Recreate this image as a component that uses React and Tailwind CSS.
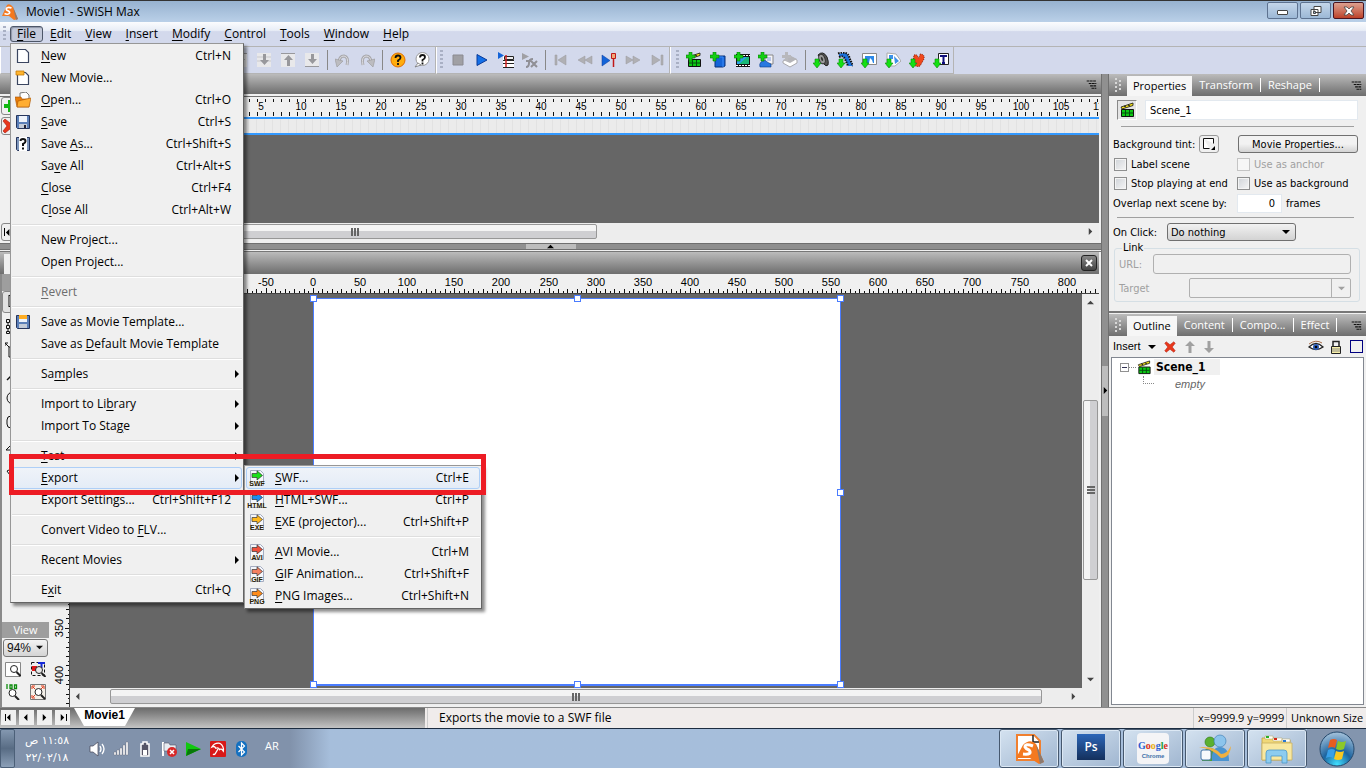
import React, { useState } from 'react';

const fileMenu = [
  { label: '&New', keys: 'Ctrl+N', icon: 'page' },
  { label: 'New Movie...', icon: 'movie' },
  { label: '&Open...', keys: 'Ctrl+O', icon: 'open' },
  { label: '&Save', keys: 'Ctrl+S', icon: 'save' },
  { label: 'Save &As...', keys: 'Ctrl+Shift+S', icon: 'saveAs' },
  { label: 'Sa&ve All', keys: 'Ctrl+Alt+S' },
  { label: '&Close', keys: 'Ctrl+F4' },
  { label: 'C&lose All', keys: 'Ctrl+Alt+W' },
  null,
  { label: 'New Project...' },
  { label: 'Open Project...' },
  null,
  { label: '&Revert', disabled: true },
  null,
  { label: 'Save as Movie Template...', icon: 'template' },
  { label: 'Save as &Default Movie Template' },
  null,
  { label: 'Sa&mples', sub: true },
  null,
  { label: 'Import to Li&brary', sub: true },
  { label: 'Import To Sta&ge', sub: true },
  null,
  { label: '&Test', sub: true },
  { label: '&Export', sub: true, open: true },
  { label: 'Export Settings...', keys: 'Ctrl+Shift+F12' },
  null,
  { label: 'Convert Video to &FLV...' },
  null,
  { label: 'Recent Movies', sub: true },
  null,
  { label: 'E&xit', keys: 'Ctrl+Q' },
];

const exportMenu = [
  { label: '&SWF...', keys: 'Ctrl+E', type: 'SWF', color: '#1be01b', open: true },
  { label: '&HTML+SWF...', keys: 'Ctrl+P', type: 'HTML', color: '#1b8cf0' },
  { label: '&EXE (projector)...', keys: 'Ctrl+Shift+P', type: 'EXE', color: '#ffb81c' },
  null,
  { label: '&AVI Movie...', keys: 'Ctrl+M', type: 'AVI', color: '#f0503c' },
  { label: '&GIF Animation...', keys: 'Ctrl+Shift+F', type: 'GIF', color: '#f58060' },
  { label: '&PNG Images...', keys: 'Ctrl+Shift+N', type: 'PNG', color: '#ff8c1a' },
];

const Plus = () => <path d="M3 0h3v3h3v3H6v3H3V6H0V3h3z" fill="#12d012" stroke="#0a7a0a" strokeWidth=".6" />;
const Down = () => <path d="M2 7h4v4h2l-4 5-4-5h2z" fill="#14e014" stroke="#0a8a0a" strokeWidth=".6" />;

const Clapper = () => (
  <>
    <path d="M2.500 7.500h12v7h-12z" fill="#0cc814" stroke="#111" />
    <path d="M3 11h11M6.500 8v6M10.500 8v6" stroke="#064a10" />
    <path d="M2 5l12-4v2.500L3 7z" fill="#f5e21a" stroke="#111" strokeWidth=".8" />
    <path d="M5 4l2 1M9 3l2 1" stroke="#111" />
  </>
);

const icons = {
  logo: (
    <>
      <path d="M0 12L5 1q3-2 6 2l5 12-4 1-5-4z" fill="#f4791f" />
      <path d="M11 3l5 12-2 1z" fill="#8c7a70" />
      <path d="M9.500 4C6 2.500 3.500 4 4.500 5.800 5.200 7 8.500 7 7.500 9.200 6.800 10.500 4 10.200 2.500 9.500" fill="none" stroke="#fff" strokeWidth="1.700" />
    </>
  ),
  page: <path d="M2.500 1.500h8l3 3v10h-11z" fill="#fff" stroke="#3b4660" strokeWidth="1.200" />,
  movie: (
    <>
      <path d="M2.500 2.500h8l3 3v9h-11z" fill="#fff" stroke="#3b4660" strokeWidth="1.200" />
      <path d="M1 1h8v4H1z" fill="#ffb52e" stroke="#c67c08" strokeWidth=".8" />
    </>
  ),
  open: (
    <>
      <path d="M5 1l6-1 3 3v6H5z" fill="#fff" stroke="#777" />
      <path d="M0 5h6l1 2h7v8H2z" fill="#e87c08" stroke="#a85200" strokeWidth=".6" />
      <path d="M3 9l13-3-2 9H2z" fill="#ffad32" stroke="#a85200" strokeWidth=".6" />
    </>
  ),
  save: (
    <>
      <path d="M1.500 1.500h13v13h-12l-1-1z" fill="#5b7fb8" stroke="#26355c" />
      <path d="M4 2h8v6H4z" fill="#eef3fb" />
      <path d="M4 10h8v4H4z" fill="#c3cbd8" />
      <path d="M9 11h2v3H9z" fill="#223" />
    </>
  ),
  saveAs: (
    <>
      <path d="M1.500 1.500h13v13h-12l-1-1z" fill="#7d96bc" stroke="#26355c" />
      <path d="M4 1h8v14H4z" fill="#fff" />
      <path d="M5.500 5q0-2 2.500-2t2.500 2.200Q10.500 7 8 8v2M8 11.500v2" fill="none" stroke="#111" strokeWidth="2" />
    </>
  ),
  template: (
    <>
      <path d="M1.500 1.500h13v13h-12l-1-1z" fill="#5b7fb8" stroke="#26355c" />
      <path d="M4 1h8v4H4z" fill="#ffad22" />
      <path d="M4 5h8v3H4z" fill="#eef3fb" />
      <path d="M4 10h8v4H4z" fill="#c3cbd8" />
    </>
  ),
  arrowDown: (
    <>
      <path d="M1 1h14v14H1z" fill="#e8e8ea" />
      <path d="M1 5h14M1 9h14" stroke="#c8c8cc" />
      <path d="M7 2h3v6h3l-4.500 5L4 8h3z" fill="#98989c" />
    </>
  ),
  arrowUp: (
    <>
      <path d="M1 1h14v14H1z" fill="#e8e8ea" />
      <path d="M1 1.500h14" stroke="#98989c" />
      <path d="M7 14h3V8h3L8.500 3 4 8h3z" fill="#98989c" />
    </>
  ),
  arrowBottom: (
    <>
      <path d="M1 1h14v14H1z" fill="#e8e8ea" />
      <path d="M1 14.500h14" stroke="#98989c" />
      <path d="M7 2h3v5h3l-4.500 5L4 7h3z" fill="#98989c" />
    </>
  ),
  undo: (
    <>
      <path d="M4 11Q4 4 9 4q5 1 3 9" fill="none" stroke="#a8a8ac" strokeWidth="3" />
      <path d="M4 11Q4 4 9 4q5 1 3 9" fill="none" stroke="#dcdce0" />
      <path d="M0 7l8 2-6 6z" fill="#bcbcc0" stroke="#989898" strokeWidth=".6" />
    </>
  ),
  redo: (
    <>
      <path d="M12 11Q12 4 7 4 2 5 4 13" fill="none" stroke="#a8a8ac" strokeWidth="3" />
      <path d="M12 11Q12 4 7 4 2 5 4 13" fill="none" stroke="#dcdce0" />
      <path d="M16 7l-8 2 6 6z" fill="#bcbcc0" stroke="#989898" strokeWidth=".6" />
    </>
  ),
  help: (
    <>
      <circle cx="8" cy="8" r="7" fill="#ffac0c" stroke="#e06c00" />
      <path d="M5.500 6q0-2.500 2.500-2.500t2.500 2.200Q10.500 7 8 8.500V10M8 11v2" fill="none" stroke="#111" strokeWidth="1.800" />
    </>
  ),
  context: (
    <>
      <circle cx="8.500" cy="7" r="6.500" fill="#fff" stroke="#999" />
      <path d="M4 11l-3 4 6-2z" fill="#fff" stroke="#777" strokeWidth=".8" />
      <path d="M6 5.500Q6 3 8.500 3T11 5.200Q11 6.500 8.500 8v1.500M8.500 10.500v2" fill="none" stroke="#111" strokeWidth="1.800" />
    </>
  ),
  stop: <path d="M3 3h10v10H3z" fill="#a0a0a4" stroke="#8a8a90" />,
  play: <path d="M3 2.500v11L13 8z" fill="#1470e8" stroke="#0a3a98" />,
  playMovie: (
    <>
      <path d="M5 4h11v12H5z" fill="#fff" />
      <path d="M5 8.500h11M5 11.500h11M5 15.500h11" stroke="#222" />
      <path d="M6.500 4.500h9v3h-9z" fill="#eee" stroke="#222" />
      <path d="M8 3v12" stroke="#d02020" strokeWidth="1.500" />
      <path d="M0 0v7l6-3.500z" fill="#1464d8" />
    </>
  ),
  playFx: (
    <>
      <path d="M0 1v7l7-3.500z" fill="#a0a0a4" />
      <path d="M4 15q3 0 3-4t4-4M4 9h5M9 9l6 6M15 9l-6 6" fill="none" stroke="#909096" strokeWidth="2" />
    </>
  ),
  first: <path d="M2 3h2v10H2zM13 3v10L5 8z" fill="#b0b0b4" stroke="#98989c" strokeWidth=".5" />,
  back: <path d="M8 4v8L1 8zM15 4v8L8 8z" fill="#b0b0b4" stroke="#98989c" strokeWidth=".5" />,
  step: (
    <>
      <path d="M1 3v11l8-5.500z" fill="#1464d8" stroke="#0a3a98" strokeWidth=".5" />
      <path d="M10.500 1.500h4v5h-4z" fill="#f0a878" stroke="#c01818" />
      <path d="M12.500 7v8" stroke="#c01818" strokeWidth="1.500" />
    </>
  ),
  forward: <path d="M1 4v8l7-4zM8 4v8l7-4z" fill="#b0b0b4" stroke="#98989c" strokeWidth=".5" />,
  last: <path d="M3 3v10l8-5zM12 3h2v10h-2z" fill="#b0b0b4" stroke="#98989c" strokeWidth=".5" />,
  addScene: (
    <>
      <Clapper />
      <Plus />
    </>
  ),
  addShape: (
    <>
      <path d="M5 5l2-1h8v10l-2 1H5z" fill="#1464d8" stroke="#083078" />
      <path d="M5 5h8v10" fill="none" stroke="#3c8cf8" />
      <Plus />
    </>
  ),
  addFilm: (
    <>
      <path d="M2 2h14v13H2z" fill="#111" />
      <path d="M3 5h12v7H3z" fill="#28a0e8" />
      <path d="M5 12l8-7h2v7z" fill="#18b878" />
      <path d="M3 3.500h13M2 13.500h14" stroke="#fff" strokeDasharray="2 1" />
      <Plus />
    </>
  ),
  addButton: (
    <>
      <path d="M7 3h8v9H7z" fill="#f4f4f8" stroke="#888" />
      <path d="M9 5h4v4H9z" fill="#b8c4e8" />
      <path d="M3 10q5-3 6 0l4 2v3H2q-1-3 1-5z" fill="#2878e0" stroke="#0a3a88" strokeWidth=".6" />
      <Plus />
    </>
  ),
  addLayer: (
    <>
      <path d="M1 9l8-4 6 3v3l-7 4-7-4z" fill="#fff" stroke="#a8a8ac" />
      <path d="M1 8l8-4 6 3-7 4z" fill="#b4b4b8" />
      <path d="M3 0h3v3h3v3H6v3H3V6H0V3h3z" fill="#b8b8bc" />
    </>
  ),
  importSound: (
    <>
      <path d="M5 3q5-5 9 2 2 5 1 8-2 2-4-1z" fill="#555" stroke="#222" />
      <ellipse cx="9" cy="7" rx="3" ry="5" fill="#999" stroke="#333" transform="rotate(-20 9 7)" />
      <ellipse cx="9" cy="7" rx="1" ry="2" fill="#333" transform="rotate(-20 9 7)" />
      <Down />
    </>
  ),
  importVideo: (
    <>
      <path d="M2 2q9-3 10 4l4 8h-5L8 7Q6 3 2 5z" fill="#1c74e0" />
      <path d="M1 1.500q10-3 11.500 4.500l3.500 8M2 5q4-2 6 2l3 7" fill="none" stroke="#111" strokeWidth="2" strokeDasharray="1.500 1" />
      <Down />
    </>
  ),
  importImage: (
    <>
      <path d="M1.500 1.500h14v11h-14z" fill="#fff" stroke="#888" />
      <path d="M4 4h9v7H4z" fill="#2c88e8" />
      <path d="M8 11l1-5 2 2 1 3z" fill="#fff" />
      <Down />
    </>
  ),
  importVector: (
    <>
      <path d="M2 1l9 1 5 7-6 5H2z" fill="#fff" stroke="#aaa" />
      <path d="M4 3h4v4H4zM9 4l5 5-4 3z" fill="#3c90e8" />
      <Down />
    </>
  ),
  importFlash: (
    <>
      <path d="M5 3q4-1 4 3 2-1 2-4 5 0 4 5l-4 7q-5 2-7-4z" fill="#f0481c" stroke="#8a1c08" strokeDasharray="1 1" />
      <Down />
    </>
  ),
  importText: (
    <>
      <path d="M5.500 1.500h10v11h-10z" fill="#fff" stroke="#222" />
      <path d="M7 4h7M10.500 4v7M9 11h3" stroke="#10107c" strokeWidth="2" />
      <Down />
    </>
  ),
  clapper: <Clapper />,
  add: <path d="M6 2h4v4h4v4h-4v4H6v-4H2V6h4z" fill="#12b812" />,
  remove: <path d="M3 1l5 4 5-4 2 2-4 5 4 5-2 2-5-4-5 4-2-2 4-5-4-5z" fill="#e8381c" stroke="#a81408" strokeWidth=".6" />,
  moveUp: <path d="M8 2l5 5h-3.500v7h-3V7H3z" fill="#a0a0a0" />,
  moveDown: <path d="M8 14l5-5h-3.500V2h-3v7H3z" fill="#a0a0a0" />,
  eye: (
    <>
      <path d="M1 8q7-7 14 0-7 5-14 0z" fill="#fff" stroke="#222" strokeWidth="1.300" />
      <circle cx="8" cy="8" r="3" fill="#2c5cb8" />
      <circle cx="8" cy="8" r="1.300" fill="#000" />
      <path d="M1 5q7-5 13-1" fill="none" stroke="#a86c48" />
    </>
  ),
  lock: (
    <>
      <path d="M5 8V2.500h6V8" fill="none" stroke="#222" strokeWidth="1.500" />
      <path d="M3.500 7.500h9v7h-9z" fill="#f8f0a8" stroke="#222" />
      <path d="M4 10h8M4 12h8" stroke="#888" />
    </>
  ),
  zoomPage: (
    <>
      <path d="M.5 1.500h15v14H.5z" fill="#fff" stroke="#888" />
      <circle cx="9" cy="8" r="3.500" fill="none" stroke="#222" />
      <path d="M11.500 11l4 4" stroke="#222" strokeWidth="2" />
    </>
  ),
  zoomSelection: (
    <>
      <path d="M1.500 1.500h13v13h-13z" fill="none" stroke="#111" strokeDasharray="3 2" />
      <path d="M2 5h5v5H2z" fill="#e01818" />
      <path d="M8 2h7M11.500 2v5" stroke="#1428d8" strokeWidth="2" />
      <circle cx="9" cy="9" r="3.500" fill="#e8e8e8" stroke="#222" />
      <path d="M11.500 12l4 4" stroke="#222" strokeWidth="2" />
    </>
  ),
  zoomFull: (
    <>
      <path d="M2 0v5M5 1h2v3.500H5zM9.500 1h2v3.500h-2z" fill="none" stroke="#0c8c0c" strokeWidth="1.300" />
      <circle cx="7.500" cy="9" r="3.500" fill="#fff" stroke="#222" />
      <path d="M10 12l4 4" stroke="#222" strokeWidth="2" />
    </>
  ),
  zoomFit: (
    <>
      <path d="M.5.5h15v15H.5z" fill="#f4f0e8" stroke="#777" />
      <path d="M2 5V2h3M11 2h3v3M2 11v3h3M3 3l2 2M13 3l-2 2M3 13l2-2" fill="none" stroke="#e03818" />
      <circle cx="8.500" cy="8" r="3.500" fill="#fff" stroke="#222" />
      <path d="M11 11l4 4" stroke="#222" strokeWidth="2" />
    </>
  ),
  list: <path d="M1 3h14M4 6.500h11M6 10h9M8 13.500h7" stroke="#111" strokeWidth="1.600" strokeDasharray="4 .7" />,
  pointer: <path d="M4 1v12l3-3 2 5 2-1-2-5h4z" fill="#fff" stroke="#111" />,
  nodes: <path d="M1.500 1.500h3v3h-3zM1.500 7.500h3v3h-3zM1.500 13.500h3v2h-3zM3 4v3M3 10v3M5 3h8" fill="none" stroke="#111" />,
  transform: <path d="M0 1l4 4M0 4V1h3M4 5h10v10H4z" fill="none" stroke="#111" />,
  line: <path d="M2 14L14 2" stroke="#111" strokeWidth="1.500" />,
  oval: <ellipse cx="8" cy="8" rx="6" ry="6" fill="none" stroke="#111" />,
  round: <rect x="2" y="2" width="12" height="12" rx="4" fill="none" stroke="#111" />,
  shape: <path d="M1 12L12 1v11z" fill="none" stroke="#111" />,
  hand: <path d="M2 9l2-1 2 2V2h2v5h5v6l-3 3H7z" fill="#fff" stroke="#111" />,
};

const Icon = ({ name, className = 'w-4 h-4' }) => (
  <svg viewBox="0 0 16 16" className={`shrink-0 ${className}`} aria-hidden="true">
    {icons[name]}
  </svg>
);

const ExportIcon = ({ type, color }) => (
  <svg viewBox="0 0 16 16" className="w-4 h-4 shrink-0 overflow-visible" aria-hidden="true">
    <path d="M1.500.5h10l3 3v12h-13z" fill="#f4f6fb" stroke="#a4acc0" />
    <path d="M3 3.500h5V.8L13.500 5.500 8 10V7.500H3z" fill={color} stroke="#333" strokeWidth=".7" />
    <text x="8" y="16" textAnchor="middle" className="fill-[#2c1c00] font-['Liberation_Sans'] text-[7px] font-bold">
      {type}
    </text>
  </svg>
);

// "&" marks the letter that is underlined
const Mnemonic = ({ text }) => {
  const at = text.indexOf('&');
  if (at < 0) return <span>{text}</span>;
  return (
    <span>
      {text.slice(0, at)}
      <span className="underline underline-offset-2">{text[at + 1]}</span>
      {text.slice(at + 2)}
    </span>
  );
};

const MenuItem = ({ item, children }) => {
  if (!item) return <div className="h-2 pt-[3px]"><div className="h-[2px] border-t border-[#dedede] bg-white" /></div>;

  return (
    <div className="relative">
      <button
        disabled={item.disabled}
        className={`flex w-full h-[22px] items-center rounded-[3px] border pl-[2px] text-left whitespace-nowrap ${
          item.sub ? 'pr-[2px]' : 'pr-[10px]'
        } ${item.open ? 'border-[#aecff7] bg-linear-to-b from-[#eff3f9] to-[#e4ecf7]' : 'border-transparent'} ${
          item.disabled ? 'text-[#6d6d6d]' : 'text-black'
        }`}
      >
        <span className="w-[26px] shrink-0">
          {item.icon && <Icon name={item.icon} />}
          {item.type && <ExportIcon type={item.type} color={item.color} />}
        </span>
        <span className="flex-1"><Mnemonic text={item.label} /></span>
        {item.keys && <span>{item.keys}</span>}
        {item.sub && (
          <svg viewBox="0 0 4 8" className="w-1 h-2" aria-hidden="true"><path d="M0 0v8l4-4z" /></svg>
        )}
      </button>
      {children}
    </div>
  );
};

const menuBox = 'absolute border border-[#979797] border-r-[#646464] border-b-[#646464] bg-[#f0f0f0] p-px shadow-[3px_3px_3px_rgba(0,0,0,0.45)]';

const MenuBar = () => {
  const [open, setOpen] = useState(true);
  const names = ['&Edit', '&View', '&Insert', '&Modify', '&Control', '&Tools', '&Window', '&Help'];

  return (
    <nav className="flex h-6 shrink-0 items-center bg-linear-to-b from-[#fbfcfe] from-0% via-[#e8edf6] via-35% to-[#d3d9ec] to-40% pl-[3px]">
      <Grip />
      <div className="relative z-20 ml-1">
        <button
          onClick={() => setOpen(!open)}
          className="block h-4 w-[33px] rounded-[3px] border border-[#4d5668] bg-[#c3c9da] leading-none shadow-[inset_1px_1px_1px_#8d94a6]"
        >
          <Mnemonic text="&File" />
        </button>
        {open && (
          <div className={`${menuBox} top-[17px] left-0 w-[234px]`}>
            {fileMenu.map((item, i) => (
              <MenuItem key={i} item={item}>
                {item?.open && (
                  <div className={`${menuBox} -top-[2px] left-[232px] w-[238px]`}>
                    {exportMenu.map((sub, j) => <MenuItem key={j} item={sub} />)}
                  </div>
                )}
              </MenuItem>
            ))}
          </div>
        )}
      </div>
      <div className="flex">
        {names.map(name => (
          <button key={name} className="px-[7px]"><Mnemonic text={name} /></button>
        ))}
      </div>
    </nav>
  );
};

const Grip = ({ className = 'h-4' }) => (
  <span className={`w-[3px] shrink-0 bg-[repeating-linear-gradient(#a9b0c4_0_2px,transparent_2px_4px)] ${className}`} />
);

const ToolGroup = ({ items, className = '' }) => (
  <div className={`flex h-full items-center border-r border-b border-[#b4b4b4] border-l border-l-white ${className}`}>
    <Grip className="mx-[3px] h-5" />
    {items.map((name, i) =>
      name ? (
        <button key={i} aria-label={name} className="flex w-6 justify-center"><Icon name={name} /></button>
      ) : (
        <span key={i} className="mx-[3px] h-5 w-px bg-[#888]" />
      )
    )}
  </div>
);

const Toolbar = () => (
  <div className="flex h-7 shrink-0 border-t border-[#b4b4b4] bg-[#d3d9ec] text-[#111]">
    <ToolGroup
      className="w-[436px] justify-end pr-px"
      items={['arrowUp', 'arrowDown', 'arrowUp', 'arrowBottom', null, 'undo', 'redo', null, 'help', 'context']}
    />
    <ToolGroup items={['stop', 'play', 'playMovie', 'playFx', null, 'first', 'back', 'step', 'forward', 'last']} />
    <ToolGroup
      className="pl-[2px]"
      items={[
        'addScene', 'addShape', 'addFilm', 'addButton', 'addLayer', null,
        'importSound', 'importVideo', 'importImage', 'importVector', 'importFlash', 'importText',
      ]}
    />
  </div>
);

const TitleBar = () => (
  <header className="flex h-[22px] shrink-0 items-center border-t border-[#333] bg-linear-to-b from-[#97b2d0] to-[#bad0e8] pl-[2px] text-black">
    <Icon name="logo" />
    <h1 className="ml-2 flex-1">Movie1 - SWiSH Max</h1>
    <div className="flex gap-[2px] self-start pt-px pr-[2px]">
      <button aria-label="Minimize" className="flex h-[17px] w-[31px] items-center justify-center rounded-[2px] border border-[#5d7290] bg-linear-to-b from-[#c4d6ea] to-[#9cb8d6] pt-1">
        <span className="h-[5px] w-[11px] rounded-[1px] border border-[#444] bg-white" />
      </button>
      <button aria-label="Restore" className="flex h-[17px] w-[31px] items-center justify-center rounded-[2px] border border-[#5d7290] bg-linear-to-b from-[#c4d6ea] to-[#9cb8d6]">
        <svg viewBox="0 0 12 12" className="h-3 w-3" aria-hidden="true">
          <path d="M4 1.500h7v6H4zM1 4.500h7v6H1z" fill="#fff" stroke="#444" />
          <path d="M3.500 6.500h2v2h-2z" fill="#a8c0dc" stroke="#444" />
        </svg>
      </button>
      <button aria-label="Close" className="flex h-[17px] w-[31px] items-center justify-center rounded-[2px] border border-[#4a1420] bg-linear-to-b from-[#dca090] to-[#bc4028]">
        <svg viewBox="0 0 12 10" className="h-[10px] w-3" aria-hidden="true">
          <path d="M1 1h3l2 2 2-2h3L8 5l3 4H8L6 7 4 9H1l3-4z" fill="#fff" stroke="#444" strokeWidth=".8" />
        </svg>
      </button>
    </div>
  </header>
);

const header = 'flex shrink-0 items-center bg-linear-to-b from-[#bcbcbc] to-[#6e6e6e]';
const arrows = {
  left: 'M5 0v8L1 4z',
  right: 'M2 0v8l4-4z',
  up: 'M0 6h8L4 2z',
  down: 'M0 2h8L4 6z',
};

const Arrow = ({ dir, className = 'w-[7px] h-[7px]' }) => (
  <svg viewBox="0 0 8 8" className={`shrink-0 ${className}`} aria-hidden="true"><path d={arrows[dir]} fill="currentColor" /></svg>
);

const HThumb = ({ className }) => (
  <div className={`flex h-[15px] items-center justify-center rounded-[2px] border border-[#979797] bg-linear-to-b from-[#f4f4f4] from-45% to-[#cfcfd2] to-50% ${className}`}>
    <span className="h-2 w-2 bg-[repeating-linear-gradient(90deg,#666_0_2px,transparent_2px_3px)]" />
  </div>
);

const TimelineRuler = () => (
  <svg className="h-5 w-full" aria-hidden="true" shapeRendering="crispEdges">
    {Array.from({ length: 150 }, (_, i) => (
      <path key={i} d={`M${i * 8 + 0.5} 2v3M${i * 8 + 0.5} 15v4`} stroke="#111" />
    ))}
    {Array.from({ length: 22 }, (_, i) => (
      <text key={i} x={(i + 1) * 40 - 4} y="13" textAnchor="middle" className="text-[10px] font-['Liberation_Sans']">
        {(i + 1) * 5}
      </text>
    ))}
  </svg>
);

const Timeline = () => (
  <section className="flex shrink-0 flex-col bg-[#f0f0f0]">
    <div className={`${header} h-5 justify-end pr-1`}>
      <Icon name="list" className="h-[11px] w-[11px]" />
    </div>
    <div className="mt-[2px] flex border-t border-[#707070] pr-[2px]">
      <div className="flex w-[225px] shrink-0 flex-col gap-[2px] pl-px">
        <button aria-label="Add row" className="h-[18px] w-6 rounded-[3px] border border-[#888]"><Icon name="add" /></button>
        <button aria-label="Delete row" className="h-[18px] w-6 rounded-[3px] border border-[#888]"><Icon name="remove" /></button>
        <button aria-label="First frame" className="mt-[86px] flex h-[18px] w-6 items-center rounded-[3px] border border-[#888] pl-[2px] text-black">
          <span className="h-2 w-px bg-black" /><Arrow dir="left" />
        </button>
      </div>
      <div className="min-w-0 flex-1">
        <TimelineRuler />
        <div className="h-[18px] border-y-2 border-[#3399ff] bg-[repeating-linear-gradient(90deg,#ebebeb_0_7px,#e2e2e2_7px_8px)]" />
        <div className="h-22 bg-[#666]" />
        <div className="flex h-[17px] items-center justify-between bg-[#ededed] pr-[5px] text-[#444]">
          <HThumb className="w-[372px] pr-28" />
          <Arrow dir="right" />
        </div>
      </div>
    </div>
    <div className="mt-[2px] flex h-[7px] justify-center border-y border-[#707070] bg-[#909090] text-black">
      <div className="flex w-[50px] items-center justify-center bg-[#bdbdbd]"><Arrow dir="up" /></div>
    </div>
  </section>
);

const UNIT = 47.1;

const StageRuler = () => (
  <svg className="h-5 w-full bg-[#f0f0f0]" aria-hidden="true">
    {Array.from({ length: 250 }, (_, i) => {
      const x = Math.round(263 + ((i - 55) * UNIT) / 10) + 0.5;
      return <path key={i} d={`M${x} 19v${(i - 55) % 10 === 0 ? -5 : (i - 55) % 2 === 0 ? -4 : -2}`} stroke="#111" />;
    })}
    {Array.from({ length: 18 }, (_, i) => (
      <text key={i} x={Math.round(263 + (i - 1) * UNIT)} y="12" textAnchor="middle" className="text-[11px] font-['Liberation_Sans']">
        {(i - 1) * 50}
      </text>
    ))}
    <path d="M0 19.500h2000" stroke="#444" />
  </svg>
);

const SideRuler = () => (
  <svg className="h-full w-5" aria-hidden="true">
    {Array.from({ length: 100 }, (_, i) => {
      const y = Math.round(4 + (i * UNIT) / 10) + 0.5;
      return <path key={i} d={`M20 ${y}h${i % 10 === 0 ? -5 : i % 2 === 0 ? -4 : -2}`} stroke="#111" />;
    })}
    {Array.from({ length: 8 }, (_, i) => {
      const y = Math.round(4 + (i + 1) * UNIT);
      return (
        <text key={i} x="13" y={y} textAnchor="middle" transform={`rotate(-90 13 ${y})`} className="text-[11px] font-['Liberation_Sans']">
          {(i + 1) * 50}
        </text>
      );
    })}
    <path d="M19.500 0v2000" stroke="#444" />
  </svg>
);

const handles = [
  '-left-1 -top-1',
  'left-1/2 -ml-[3px] -top-1',
  '-right-1 -top-1',
  '-left-1 top-1/2 -mt-[3px]',
  '-right-1 top-1/2 -mt-[3px]',
  '-left-1 -bottom-1',
  'left-1/2 -ml-[3px] -bottom-1',
  '-right-1 -bottom-1',
];

const tools = ['pointer', 'nodes', 'transform', 'line', 'oval', 'round', 'shape', 'hand'];

const ToolBox = () => (
  <aside className="flex w-[50px] shrink-0 flex-col border-l-2 border-[#8a8a8a] bg-[#f0f0f0] text-[#111]">
    <div className="h-[17px] bg-[#9e9e9e]" />
    <div className="flex flex-1 flex-col items-start gap-[2px]">
      {tools.map((name, i) => (
        <button
          key={name}
          aria-label={name}
          className={`flex h-[22px] w-6 items-center rounded-[3px] border pl-[2px] ${i === 0 ? 'border-[#888] bg-[#e2e2e2]' : 'border-transparent'}`}
        >
          <Icon name={name} />
        </button>
      ))}
    </div>
    <div className="mr-px h-4 bg-[#9e9e9e] text-center text-[11px] leading-4 text-white">View</div>
    <label className="relative mt-px ml-px h-[18px] w-[45px]">
      <select aria-label="Zoom" className="h-full w-full appearance-none rounded-[3px] border border-[#777] bg-linear-to-b from-[#f4f4f4] to-[#d4d4d4] pl-[3px] font-['Liberation_Sans'] text-[12px] leading-none">
        <option>94%</option>
      </select>
      <span className="absolute top-[5px] right-[5px]"><Arrow dir="down" /></span>
    </label>
    <div className="grid grid-cols-2 gap-[7px] px-[3px] pt-1 pb-[7px]">
      {['zoomPage', 'zoomSelection', 'zoomFull', 'zoomFit'].map(name => (
        <button key={name} aria-label={name} className="w-4"><Icon name={name} /></button>
      ))}
    </div>
  </aside>
);

const Stage = () => (
  <section className="mt-[1px] flex min-h-0 flex-1 flex-col border-t border-[#777] bg-[#f0f0f0] pr-[2px]">
    <div className={`${header} h-[22px] justify-between pr-[2px] pl-1`}>
      <div className="h-5 w-10 self-end bg-[#f0f0f0]" />
      <button aria-label="Close movie" className="flex h-4 w-4 items-center justify-center rounded-[3px] border border-[#222] bg-linear-to-b from-[#888] to-[#444]">
        <svg viewBox="0 0 8 8" className="h-2 w-2" aria-hidden="true"><path d="M1 1l6 6M7 1L1 7" stroke="#fff" strokeWidth="2" /></svg>
      </button>
    </div>
    <div className="flex min-h-0 flex-1">
      <ToolBox />
      <div className="flex min-w-0 flex-1 flex-col">
        <StageRuler />
        <div className="flex min-h-0 flex-1">
          <div className="w-5 shrink-0 overflow-hidden"><SideRuler /></div>
          <div className="flex min-w-0 flex-1 flex-col">
            <div className="flex min-h-0 flex-1">
              <div className="min-w-0 flex-1 overflow-hidden bg-[#666] pt-1 pl-[243px]">
                <div className="relative h-[388px] w-[528px] border border-b-2 border-[#4a7cff] bg-white">
                  {handles.map(place => (
                    <span key={place} className={`absolute h-[7px] w-[7px] border border-[#4a7cff] bg-white ${place}`} />
                  ))}
                </div>
              </div>
              <div className="flex w-[17px] flex-col items-center bg-[#ededed] py-[5px] text-[#444]">
                <Arrow dir="up" />
                <div className="mt-[94px] flex h-[180px] w-[15px] items-center justify-center rounded-[2px] border border-[#979797] bg-linear-to-r from-[#f4f4f4] from-45% to-[#cfcfd2] to-50%">
                  <span className="h-2 w-2 bg-[repeating-linear-gradient(#666_0_2px,transparent_2px_3px)]" />
                </div>
                <span className="flex-1" />
                <Arrow dir="down" />
              </div>
            </div>
            <div className="mb-[2px] flex h-[17px] shrink-0 items-center bg-[#ededed] pr-[22px] pl-[5px] text-[#444]">
              <Arrow dir="left" />
              <HThumb className="mr-7 ml-7 flex-1" />
              <Arrow dir="right" />
            </div>
          </div>
        </div>
      </div>
    </div>
  </section>
);

const PanelTabs = ({ tabs }) => (
  <div className={`${header} h-[22px] pr-1 pl-1 text-white`}>
    <svg viewBox="0 0 10 16" className="h-4 w-[10px]" aria-hidden="true">
      <path d="M2 1h2v2H2zM6 3h2v2H6zM2 5h2v2H2zM6 7h2v2H6zM2 9h2v2H2zM6 11h2v2H6zM2 13h2v2H2z" fill="#d8d8d8" />
    </svg>
    <div className="flex flex-1 items-center self-stretch">
      {tabs.map((tab, i) =>
        i === 0 ? (
          <button key={tab} className="mt-[2px] ml-1 self-stretch bg-[#f6f6f6] px-[6px] text-black">{tab}</button>
        ) : (
          <button key={tab} className="border-r border-white px-[7px] leading-[14px] whitespace-nowrap">{tab}</button>
        )
      )}
    </div>
    <Icon name="list" className="h-[11px] w-[11px]" />
  </div>
);

const Check = ({ label, disabled, className = '' }) => (
  <label className={`flex items-center gap-1 whitespace-nowrap ${disabled ? 'text-[#a0a0a0]' : ''} ${className}`}>
    <input
      type="checkbox"
      disabled={disabled}
      className={`h-[13px] w-[13px] appearance-none border ${
        disabled ? 'border-[#c4c4c4] bg-[#f6f6f6]' : 'border-[#8e8f8f] bg-linear-to-br from-[#cfd3d8] to-[#f6f6f6] shadow-[inset_0_0_0_1px_#f4f4f4]'
      }`}
    />
    {label}
  </label>
);

const Properties = () => (
  <section className="shrink-0 border-b-2 border-[#777] bg-[#f0f0f0] text-[11px]">
    <PanelTabs tabs={['Properties', 'Transform', 'Reshape']} />
    <form className="flex flex-col px-1 pt-1 pb-[9px] font-['DejaVu_Sans_Condensed','Liberation_Sans',sans-serif] leading-none text-black" onSubmit={e => e.preventDefault()}>
      <div className="flex items-center gap-2 pr-1 pl-1">
        <span className="flex h-5 w-5 items-center justify-center border border-[#888] border-r-white border-b-white bg-[#e4e4e4]"><Icon name="clapper" /></span>
        <input aria-label="Scene name" defaultValue="Scene_1" className="h-5 min-w-0 flex-1 border border-[#e3e9ef] bg-white px-1" />
      </div>
      <hr className="mx-2 mt-[6px] mb-[7px] border-[#a0a0a0]" />
      <div className="flex h-5 items-center">
        <span className="w-[86px] whitespace-nowrap">Background tint:</span>
        <button aria-label="Background tint" className="flex h-[18px] w-5 items-center justify-center rounded-[3px] border border-[#999]">
          <svg viewBox="0 0 14 14" className="h-[14px] w-[14px]" aria-hidden="true">
            <path d="M1.500 1.500h10v5M1.500 1.500v10h6" fill="#fff" stroke="#111" />
            <path d="M9 13h4V9z" />
          </svg>
        </button>
        <span className="flex-1" />
        <button className="mr-1 h-[18px] w-[120px] rounded-[3px] border border-[#707070] bg-linear-to-b from-[#f2f2f2] from-50% to-[#d3d3d3] whitespace-nowrap">Movie Properties...</button>
      </div>
      <div className="grid grid-cols-[123px_1fr] pl-px">
        <Check label="Label scene" className="h-5" />
        <Check label="Use as anchor" disabled className="h-5" />
        <Check label="Stop playing at end" className="h-[19px]" />
        <Check label="Use as background" className="h-[19px]" />
      </div>
      <label className="flex h-5 items-center">
        <span className="w-[124px] whitespace-nowrap">Overlap next scene by:</span>
        <input defaultValue="0" className="h-[19px] w-[45px] border border-[#e3e9ef] bg-white pr-[6px] text-right" />
        <span className="ml-1">frames</span>
      </label>
      <hr className="mt-1 mr-2 ml-1 border-[#a0a0a0]" />
      <div className="mt-[5px] flex h-[18px] items-center">
        <label htmlFor="on-click" className="w-[54px] whitespace-nowrap">On Click:</label>
        <div className="relative h-[18px] w-[129px]">
          <select id="on-click" className="h-full w-full appearance-none rounded-[3px] border border-[#707070] bg-linear-to-b from-[#f2f2f2] to-[#d3d3d3] px-[3px] leading-none">
            <option>Do nothing</option>
          </select>
          <span className="absolute top-[5px] right-[6px]"><Arrow dir="down" className="h-2 w-2" /></span>
        </div>
      </div>
      <fieldset className="mt-px mr-[2px] ml-px rounded-[3px] border border-[#d5dfe5] px-1 pb-[3px] text-[#a0a0a0]">
        <legend className="ml-[3px] h-3 px-px text-black">Link</legend>
        <label className="flex h-5 items-center">
          <span className="w-[34px]">URL:</span>
          <input disabled className="h-5 min-w-0 flex-1 rounded-[3px] border border-[#b0b0b0] bg-[#f0f0f0]" />
          <span className="w-1" />
        </label>
        <label className="mt-1 flex h-5 items-center">
          <span className="w-[70px]">Target</span>
          <span className="flex h-5 min-w-0 flex-1 rounded-[2px] border border-[#b0b0b0]">
            <input disabled className="min-w-0 flex-1" />
            <span className="flex w-[19px] items-center justify-center border-l border-[#b0b0b0] text-[#a0a0a0]"><Arrow dir="down" /></span>
          </span>
          <span className="w-1" />
        </label>
      </fieldset>
    </form>
  </section>
);

const Outline = () => (
  <section className="mt-[1px] flex min-h-0 flex-1 flex-col bg-[#f0f0f0] text-[11px]">
    <PanelTabs tabs={['Outline', 'Content', 'Compo...', 'Effect']} />
    <div className="flex h-[21px] shrink-0 items-center pr-[3px] pl-1 font-['Liberation_Sans',sans-serif] text-black">
      <button className="flex items-center gap-[7px]">Insert <Arrow dir="down" className="h-2 w-2" /></button>
      <button aria-label="Delete" className="ml-2"><Icon name="remove" className="h-3 w-3" /></button>
      <button aria-label="Move up" className="ml-[6px]"><Icon name="moveUp" /></button>
      <button aria-label="Move down" className="ml-[3px] flex-1"><Icon name="moveDown" /></button>
      <div className="flex items-center gap-1">
        <Icon name="eye" />
        <Icon name="lock" />
        <span className="ml-[2px] h-[13px] w-[13px] border border-[#000080]" />
      </div>
    </div>
    <div className="mx-[2px] mb-[2px] flex-1 border border-[#828790] bg-white pl-2 text-black">
      <div className="flex h-[18px] items-center">
        <span className="flex h-[9px] w-[9px] items-center justify-center border border-[#919191]"><span className="h-px w-[5px] bg-[#335]" /></span>
        <span className="w-[7px] border-t border-dotted border-[#888]" />
        <Icon name="clapper" className="h-[15px] w-4" />
        <span className="ml-[2px] w-[66px] bg-[#f0f0f0] pl-[2px] font-['DejaVu_Sans_Condensed'] text-[12px] leading-4 font-bold">Scene_1</span>
      </div>
      <div className="flex h-4 items-center pl-[23px]">
        <span className="mb-2 h-2 w-[11px] border-b border-l border-dotted border-[#888]" />
        <span className="ml-[21px] font-['Liberation_Sans'] text-[#666] italic">empty</span>
      </div>
    </div>
  </section>
);

const SheetTabs = () => (
  <div className="flex w-[425px] shrink-0 items-start bg-linear-to-b from-[#6c6c6c] to-[#c4c4c4]">
    <div className="flex gap-[3px] pt-[2px] pl-px text-black">
      {['first', 'prev', 'next', 'last'].map(name => (
        <button key={name} aria-label={name} className="flex h-[15px] w-[15px] items-center justify-center bg-[#f0f0f0]">
          {name === 'first' && <span className="h-[7px] w-px bg-black" />}
          <Arrow dir={name === 'first' || name === 'prev' ? 'left' : 'right'} />
          {name === 'last' && <span className="h-[7px] w-px bg-black" />}
        </button>
      ))}
    </div>
    <button className="ml-1 h-[18px] w-[61px] bg-white pb-1 font-['Liberation_Sans'] text-[12px] leading-none font-bold text-black [clip-path:polygon(0_0,100%_0,51px_100%,10px_100%)]">
      Movie1
    </button>
  </div>
);

const StatusBar = () => (
  <footer className="flex h-[21px] shrink-0 border-t border-[#888] bg-[#f0eceb] text-black">
    <SheetTabs />
    <p className="ml-[2px] flex-1 border-l border-[#ccc] pl-[11px] leading-5">Exports the movie to a SWF file</p>
    <p className="w-[93px] border-l border-[#ccc] pl-1 text-[11px] leading-5 whitespace-nowrap">x=9999.9 y=9999</p>
    <p className="w-[80px] border-l border-[#ccc] pl-1 text-[11px] leading-5 whitespace-nowrap">Unknown Size</p>
  </footer>
);

const taskApps = [
  {
    name: 'SWiSH Max',
    art: (
      <>
        <path d="M4 2h17l6 6v19H4z" fill="#fff" stroke="#f08030" strokeWidth="2" />
        <path d="M20 2v7h6" fill="#fff" stroke="#222" strokeWidth="1.500" />
        <path d="M3 25l7-13q7-7 13-1l8 18-5 2-9-6z" fill="#f4791f" />
        <path d="M23 11l8 18-4 2z" fill="#8c7a70" />
        <path d="M20 13q-8-3-8 1 1 2 4 3 4 5-6 4" fill="none" stroke="#fff" strokeWidth="3" />
      </>
    ),
  },
  {
    name: 'Photoshop',
    art: (
      <>
        <defs>
          <linearGradient id="ps" x2="0" y2="1"><stop stopColor="#2c66b8" /><stop offset="1" stopColor="#14305c" /></linearGradient>
        </defs>
        <path d="M2 1h28v26H2z" fill="url(#ps)" />
        <text x="16" y="18" textAnchor="middle" className="fill-white font-['Open_Sans'] text-[12px] font-semibold">Ps</text>
      </>
    ),
  },
  {
    name: 'Google Chrome',
    art: (
      <>
        <rect x="0" y="0" width="32" height="31" rx="4" fill="#f4f4f6" />
        <text x="16" y="16" textAnchor="middle" className="font-['Liberation_Serif'] text-[10px] font-bold">
          <tspan fill="#2c60d0">G</tspan><tspan fill="#d83020">o</tspan><tspan fill="#e8b010">o</tspan><tspan fill="#2c60d0">g</tspan><tspan fill="#20a040">l</tspan><tspan fill="#d83020">e</tspan>
        </text>
        <text x="16" y="25" textAnchor="middle" className="fill-[#3c70a8] font-['Liberation_Sans'] text-[6px] font-bold">Chrome</text>
      </>
    ),
  },
  {
    name: 'Messenger',
    art: (
      <>
        <circle cx="11" cy="9" r="5" fill="#5ab030" stroke="#2c7818" strokeWidth=".6" />
        <path d="M3 28q0-13 8-13t7 13z" fill="#4c9c38" />
        <circle cx="21" cy="8" r="6" fill="#8cc4ec" stroke="#3878b0" strokeWidth=".6" />
        <path d="M13 28q-1-14 8-14t9 14z" fill="#4c94d0" />
        <path d="M0 14q16-1 22 7 6 0 10-8-1 12-10 12Q14 16 0 14z" fill="#f0b040" />
        <rect x="2" y="17" width="10" height="10" rx="2" fill="#f8fafc" stroke="#4878a8" />
      </>
    ),
  },
  {
    name: 'Explorer',
    art: (
      <>
        <path d="M1 5h12l2 2h14v20H1z" fill="#f0d878" stroke="#c0a040" strokeWidth=".8" />
        <path d="M4 3h8v3H4zM12 5h9v3h-9zM21 6h8v3h-8z" fill="#fff" stroke="#b0a060" strokeWidth=".5" />
        <path d="M5 3h3v2H5z" fill="#28b028" />
        <path d="M13 5h3v2h-3z" fill="#d02818" />
        <path d="M22 7h3v2h-3z" fill="#2878d0" />
        <path d="M1 10h30v17H1z" fill="#f8e8a0" stroke="#c8b060" strokeWidth=".8" />
        <path d="M5 30V20q0-3 3-3h15q3 0 3 3v10h-5v-7H10v7z" fill="#8cccf0" stroke="#4c98c8" strokeWidth=".8" />
      </>
    ),
  },
];

const Tray = () => (
  <div className="flex items-center text-white">
    <div className="ml-2 w-12 text-center font-['DejaVu_Sans'] text-[11px] leading-[17px]">
      <p dir="rtl">١١:٥٨ ص</p>
      <p dir="rtl">٢٢/٠٢/١٨</p>
    </div>
    <svg viewBox="0 0 160 18" className="ml-[18px] h-[18px] w-[160px]" aria-hidden="true">
      <path d="M1 6h3l5-4v14l-5-4H1z" fill="#fff" stroke="#445" strokeWidth=".7" />
      <path d="M11 6q2 3 0 6M13 4q4 5 0 10" fill="none" stroke="#fff" strokeWidth="1.300" />
      <path d="M25 15v-3h2v3zM28 15v-5h2v5zM31 15V8h2v7zM34 15V5h2v10zM37 15V2h2v13z" fill="#fff" stroke="#667" strokeWidth=".4" />
      <path d="M54 2h4v2h2v12h-8V4h2z" fill="#556" stroke="#fff" strokeWidth="1.500" />
      <path d="M54 10h4v5h-4z" fill="#fff" />
      <path d="M74 2v14" stroke="#fff" strokeWidth="2" />
      <path d="M75 3h5l1 2h6v8h-5l-1-2h-6z" fill="#e8ecf2" stroke="#556" strokeWidth=".6" />
      <circle cx="83" cy="12" r="5" fill="#d82828" />
      <path d="M81 10l4 4M85 10l-4 4" stroke="#fff" strokeWidth="1.500" />
      <path d="M97 2l15 7-15 7z" fill="#10c810" />
      <path d="M97 16l15-7H99z" fill="#087808" />
      <rect x="121" y="1" width="16" height="16" rx="1" fill="#d81818" />
      <path d="M123 9q1-5 6-6 5 1 6 6-3-2-4 0-2-2-4 0-2-2-4 0z" fill="none" stroke="#fff" strokeWidth="1.300" transform="rotate(20 129 8)" />
      <path d="M129 9l-3 5q-1 1-2 0" fill="none" stroke="#fff" strokeWidth="1.300" />
      <rect x="147" y="1" width="11" height="16" rx="5" fill="#1470c0" />
      <path d="M149.500 6l6 6-3 3V3l3 3-6 6" fill="none" stroke="#fff" strokeWidth="1.200" />
    </svg>
    <span className="ml-4 pb-1 text-[11px]">AR</span>
  </div>
);

const TaskBar = () => (
  <footer className="flex h-10 shrink-0 border-t border-[#1c2c40] bg-linear-to-r from-[#8192ab] from-[290px] to-[#a6bedb] to-[330px]">
    <button aria-label="Show desktop" className="w-[15px] rounded-[2px] border border-[#4c6078] bg-linear-to-b from-[#8498b0] via-[#586c84] to-[#8ca0b8]" />
    <div className="flex"><Tray /></div>
    <div className="flex flex-1 justify-end gap-[2px]">
      {taskApps.map(app => (
        <button
          key={app.name}
          aria-label={app.name}
          className="flex w-[60px] items-start justify-center rounded-[3px] border border-[#46586e] bg-linear-to-br from-[#d4e2f0] to-[#a0b6d0] pt-[3px] shadow-[inset_0_0_0_1px_#dce8f4]"
        >
          <svg viewBox="0 0 32 32" className="h-8 w-8" aria-hidden="true">{app.art}</svg>
        </button>
      ))}
    </div>
    <div className="flex w-[59px] justify-center bg-[#8395ae]">
      <button aria-label="Start">
        <svg viewBox="0 0 36 36" className="h-9 w-9" aria-hidden="true">
          <defs>
            <radialGradient id="orb" cy=".95" r=".95">
              <stop stopColor="#40e0ff" />
              <stop offset=".45" stopColor="#1c64a0" />
              <stop offset="1" stopColor="#a8c4dc" />
            </radialGradient>
          </defs>
          <circle cx="18" cy="18" r="17" fill="url(#orb)" stroke="#24486c" />
          <path d="M11 9q4-2 7 0l-2 8q-3-2-7 0z" fill="#e85c20" />
          <path d="M19 10q4 2 8 0l-2 8q-4 2-8 0z" fill="#8cc828" />
          <path d="M9 19q4-2 7 0l-2 8q-3-2-7 0z" fill="#38a0e8" />
          <path d="M17 20q4 2 8 0l-2 8q-4 2-8 0z" fill="#f8c820" />
        </svg>
      </button>
    </div>
  </footer>
);

const App = () => (
  <div className="relative flex h-screen flex-col overflow-hidden bg-[#f0f0f0] font-['Open_Sans','Noto_Sans',sans-serif] text-[12px]">
    <TitleBar />
    <MenuBar />
    <Toolbar />
    <main className="flex min-h-0 flex-1">
      <div className="flex min-w-0 flex-1 flex-col">
        <Timeline />
        <Stage />
      </div>
      <div className="flex w-2 shrink-0 flex-col justify-center border-x border-[#707070] bg-[#909090] text-black">
        <div className="flex h-[50px] items-center bg-[#bdbdbd]"><Arrow dir="right" /></div>
      </div>
      <div className="flex w-[257px] shrink-0 flex-col">
        <Properties />
        <Outline />
      </div>
    </main>
    <StatusBar />
    <TaskBar />
    {/* highlight around Export > SWF */}
    <div className="pointer-events-none absolute top-[454px] left-[9px] z-30 h-[41px] w-[477px] border-5 border-[#ed1c24]" />
  </div>
);

export default App;
